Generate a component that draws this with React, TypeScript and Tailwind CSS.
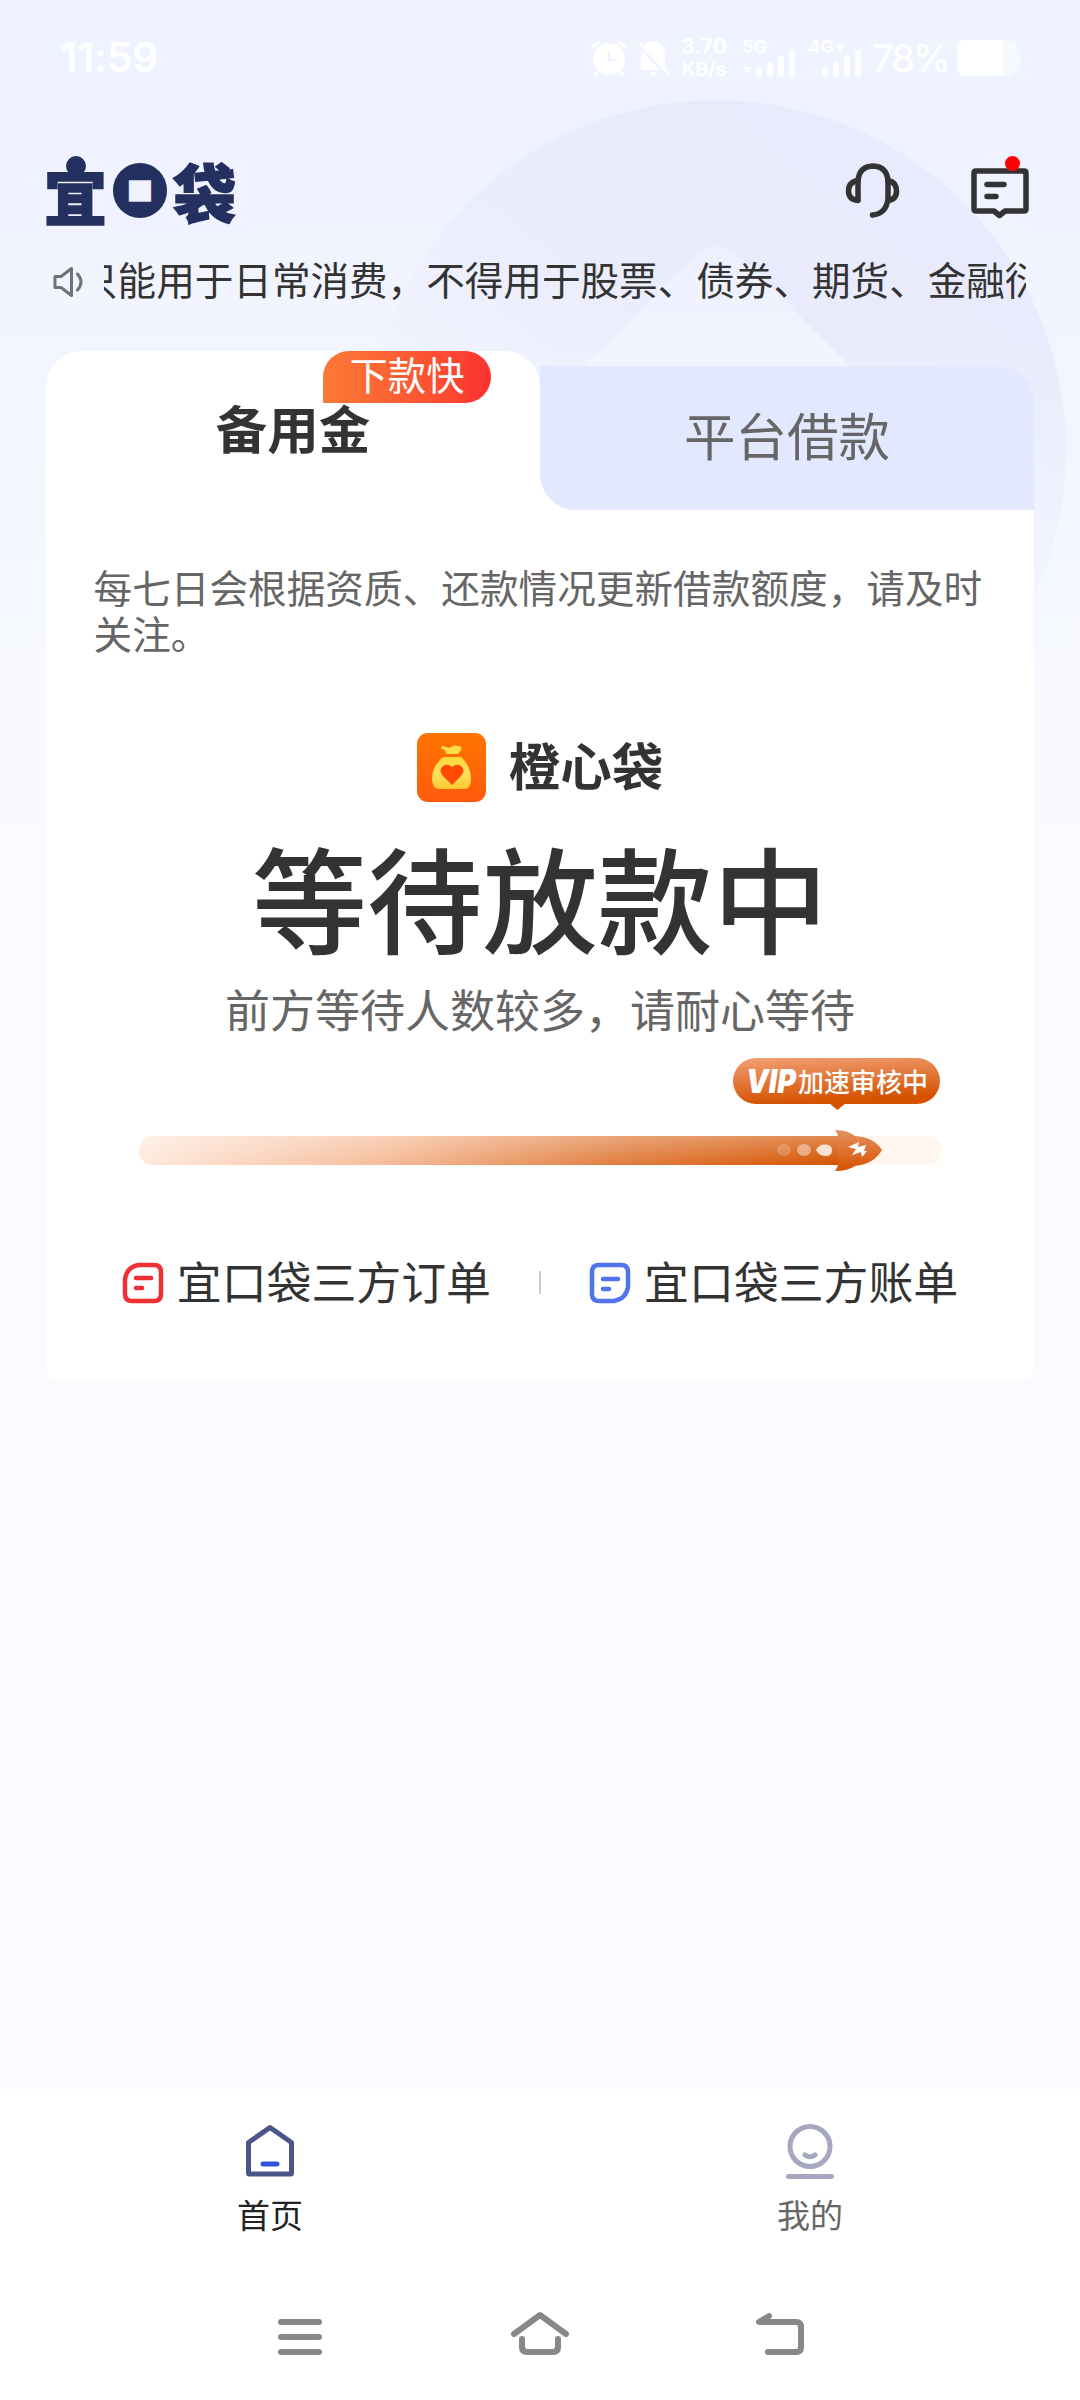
import React from 'react';

interface MenuLink {
  id: string;
  label: string;
  icon: React.ReactNode;
}

const OrderIcon: React.FC = () => (
  <svg width="42" height="42" viewBox="0 0 42 42" fill="none" stroke="#ee2f33" strokeWidth="4.500" strokeLinecap="round">
    <path d="M16 3H32Q39 3 39 10V32Q39 39 32 39H10Q3 39 3 32V17Q5 5 16 3Z" />
    <path d="M14 16H29M14 26H20" />
  </svg>
);

const BillIcon: React.FC = () => (
  <svg width="42" height="42" viewBox="0 0 42 42" fill="none" stroke="#4f74ee" strokeWidth="4.500" strokeLinecap="round">
    <path d="M10 3H32Q39 3 39 10V25Q37 37 25 39H10Q3 39 3 32V10Q3 3 10 3Z" />
    <path d="M14 17H29M14 27H20" />
  </svg>
);

const links: MenuLink[] = [
  { id: 'order', label: '宜口袋三方订单', icon: <OrderIcon /> },
  { id: 'bill', label: '宜口袋三方账单', icon: <BillIcon /> },
];

const Backdrop: React.FC = () => (
  <svg className="absolute left-0 top-0" width="1080" height="900" viewBox="0 0 1080 900">
    <defs>
      <linearGradient id="disc" gradientUnits="userSpaceOnUse" x1="880" y1="130" x2="480" y2="640">
        <stop offset="0" stopColor="#e8eafd" />
        <stop offset="0.45" stopColor="#ebedfd" />
        <stop offset="0.8" stopColor="#f2f4fe" />
      </linearGradient>
      <linearGradient id="discFade" x1="0" y1="0" x2="0" y2="1">
        <stop offset="0.35" stopColor="#fff" />
        <stop offset="0.85" stopColor="#000" />
      </linearGradient>
      <mask id="discMask">
        <rect x="366" y="100" width="700" height="700" fill="url(#discFade)" />
      </mask>
      <linearGradient id="peak" x1="0" y1="0" x2="0" y2="1">
        <stop offset="0" stopColor="#eef0fe" />
        <stop offset="1" stopColor="#f2f4ff" />
      </linearGradient>
    </defs>
    <circle cx="716" cy="450" r="350" fill="url(#disc)" mask="url(#discMask)" />
    <path d="M690 260Q717 232 744 260L860 376H574Z" fill="url(#peak)" />
  </svg>
);

const Signal: React.FC = () => (
  <svg width="40" height="27" viewBox="0 0 40 27" fill="#fff">
    <rect x="0" y="18" width="6" height="9" rx="3" />
    <rect x="11" y="12" width="6" height="15" rx="3" />
    <rect x="22" y="6" width="6" height="21" rx="3" />
    <rect x="33" y="0" width="6" height="27" rx="3" />
  </svg>
);

const StatusBar: React.FC = () => (
  <div className="flex h-[116px] items-center pl-[60px] pr-[60px] font-['Inter','Noto_Sans_CJK_SC',sans-serif] text-white">
    <span className="text-[41px] font-semibold tracking-[-0.300px]">11:59</span>
    <div className="ml-auto flex items-center">
      <svg width="36" height="38" viewBox="0 0 36 38">
        <circle cx="18" cy="20" r="16" fill="#fff" />
        <path d="M2 8L8 3M34 8L28 3M7 32L4 36M29 32L32 36" stroke="#fff" strokeWidth="3" strokeLinecap="round" />
        <path d="M18 12V21H25" stroke="#f0f2ff" strokeWidth="2.500" fill="none" />
      </svg>
      <svg className="ml-[10px]" width="32" height="38" viewBox="0 0 32 38">
        <path d="M4 28V16Q5 3 16 2Q27 3 28 16V28L31 31H1ZM12 33H20Q19 37 16 37Q13 37 12 33Z" fill="#fff" />
        <path d="M1 4L31 36" stroke="#eff2ff" strokeWidth="5" />
        <path d="M2 3L32 36" stroke="#fff" strokeWidth="2" />
      </svg>
      <div className="ml-[12px] flex w-[46px] flex-col items-center text-[21px] font-bold leading-[23px]">
        <span>3.70</span>
        <span className="text-[19px]">KB/s</span>
      </div>
      <div className="relative ml-[29px] flex h-[38px] items-end">
        <span className="absolute -left-[14px] -top-[1px] text-[18px] font-bold leading-[18px]">5G</span>
        <svg className="absolute -left-[13px] bottom-1" width="9" height="6" viewBox="0 0 9 6" fill="#fff">
          <path d="M0 0H9L4.500 6Z" />
        </svg>
        <Signal />
      </div>
      <div className="relative ml-[26px] flex h-[38px] items-end">
        <span className="absolute -left-[14px] -top-[1px] text-[18px] font-bold leading-[18px]">4G+</span>
        <Signal />
      </div>
      <span className="ml-[10px] w-[75px] text-[38px] font-medium tracking-[-2px]">78%</span>
      <div className="ml-[10px] flex h-[36px] w-[63px]">
        <div className="w-[46px] rounded-l-[8px] bg-white" />
        <div className="w-[14px] rounded-r-[8px] bg-white/50" />
        <div className="my-[10px] w-[3px] rounded-r-full bg-white/50" />
      </div>
    </div>
  </div>
);

const Header: React.FC = () => (
  <header className="flex h-[128px] items-start justify-between pl-[46px] pr-[50px] pt-[40px]">
    <h1 className="relative flex h-[70px] w-[190px] text-[63px] font-black leading-[62px] text-[#24305f]">
      <span className="-ml-[2px] mt-[6px] w-[63px] [-webkit-text-stroke:1.500px_#24305f]">宜</span>
      <span className="ml-[6px] mt-[7px] flex h-[55px] w-[55px] items-center justify-center rounded-full bg-[#24305f]">
        <span className="flex h-[28px] w-[28px] items-center justify-center rounded-[2px] bg-[#f0f3ff]">
          <span className="-mt-[3px] text-[42px] font-bold leading-[42px]">口</span>
        </span>
      </span>
      <span className="ml-[6px] mt-[3px] w-[63px] [-webkit-text-stroke:1.500px_#24305f]">袋</span>
      <span className="absolute left-[20px] top-0 h-[20px] w-[20px] rounded-full bg-[#24305f]" />
    </h1>
    <div className="flex items-start gap-[71px]">
      <svg className="mt-[7px]" width="55" height="56" viewBox="0 0 55 56" fill="none" stroke="#333" strokeWidth="5.500" strokeLinecap="round" strokeLinejoin="round">
        <path d="M13 37V18Q14 3.500 28 3Q42 3.500 43 18V36Q41 51 27.500 52" />
        <path d="M13 17.500Q3.500 19 3.500 28Q3.500 36.500 13 37.500M43 17.500Q51.500 19 51.500 28Q51.500 36.500 43 37.500" />
      </svg>
      <div className="relative">
        <svg className="mt-[10px]" width="59" height="54" viewBox="0 0 59 54" fill="none" stroke="#333" strokeWidth="5.500" strokeLinecap="round" strokeLinejoin="round">
          <path d="M5 5H53Q55 5 55 7V43Q55 45 53 45H34L28.500 49.500L23 45H5Q3 45 3 43V7Q3 5 5 5Z" />
          <path d="M16 18.500H33M16 30.500H25" />
        </svg>
        <span className="absolute left-[34px] top-0 h-[15px] w-[15px] rounded-full bg-[#ff0000]" />
      </div>
    </div>
  </header>
);

const Notice: React.FC = () => (
  <div className="flex h-[76px] items-center pl-[52px] pr-[54px]">
    <svg width="32" height="32" viewBox="0 0 32 32" fill="none" stroke="#6f7078" strokeWidth="3" strokeLinejoin="round" strokeLinecap="round">
      <path d="M3 10.500H9L19.500 2.500V29.500L9 21.500H3Z" />
      <path d="M25.500 8Q32.500 16 25.500 24" />
    </svg>
    <div className="ml-[20px] flex-1 overflow-hidden">
      <p className="-ml-[25px] -mt-[8px] whitespace-nowrap text-[38.600px] leading-[56px] text-[#333]">
        只能用于日常消费，不得用于股票、债券、期货、金融衍
      </p>
    </div>
  </div>
);

const Tabs: React.FC = () => (
  <div className="flex h-[159px] items-end">
    <div className="relative h-[159px] w-1/2 rounded-t-[36px] bg-white pt-[51px] text-center">
      <span className="text-[51.500px] font-bold leading-[50px] text-[#333]">备用金</span>
      <span className="absolute left-[277px] top-0 h-[52px] w-[168px] rounded-[26px] rounded-bl-none bg-linear-to-r from-[#fb7a35] to-[#fb3030] text-center text-[38.300px] leading-[46px] text-white">
        下款快
      </span>
    </div>
    <div className="h-[144px] w-1/2 bg-[linear-gradient(180deg,transparent_50%,#fff_50%)]">
      <div className="flex h-full items-center justify-center rounded-bl-[36px] rounded-tr-[36px] bg-[#e2e8fe] pb-[8px] text-[51.500px] text-[#666]">
        平台借款
      </div>
    </div>
  </div>
);

const MoneyBag: React.FC = () => (
  <svg width="69" height="69" viewBox="0 0 69 69">
    <defs>
      <linearGradient id="tile" x1="0" y1="0" x2="0" y2="1">
        <stop offset="0" stopColor="#ff7400" />
        <stop offset="1" stopColor="#ff5a0c" />
      </linearGradient>
      <linearGradient id="bag" x1="0" y1="0" x2="0" y2="1">
        <stop offset="0" stopColor="#ffd93a" />
        <stop offset="0.5" stopColor="#ffe05a" />
        <stop offset="1" stopColor="#ffc92e" />
      </linearGradient>
    </defs>
    <rect width="69" height="69" rx="11" fill="url(#tile)" />
    <path d="M24 14Q26 12 29 14Q33 16 36 13Q39 12 41 13Q46 13 44 17L41 21H29L28 17Q24 16 24 14Z" fill="#ffdd45" />
    <path d="M26 24H44Q54 33 54 46Q54 56 47 56H23Q15 56 15 46Q15 33 26 24Z" fill="url(#bag)" />
    <path d="M35 52L26 43Q21 37 26 33Q31 30 35 34Q39 30 44 33Q49 37 44 43Z" fill="#ff4a06" />
  </svg>
);

const ReviewProgress: React.FC = () => (
  <svg className="mt-[20px]" width="804" height="118" viewBox="138 1056 804 118">
    <defs>
      <linearGradient id="pill" x1="0" y1="0" x2="0.25" y2="1">
        <stop offset="0" stopColor="#f2a077" />
        <stop offset="1" stopColor="#d45200" />
      </linearGradient>
      <linearGradient id="bar" x1="0" y1="0" x2="1" y2="0.012">
        <stop offset="0" stopColor="#ffeade" />
        <stop offset="0.35" stopColor="#f6bd9b" />
        <stop offset="0.7" stopColor="#e07c3c" />
        <stop offset="1" stopColor="#d55300" />
      </linearGradient>
      <linearGradient id="sheen" x1="0" y1="0" x2="0" y2="1">
        <stop offset="0" stopColor="#fff" stopOpacity="0.3" />
        <stop offset="1" stopColor="#fff" stopOpacity="0" />
      </linearGradient>
      <linearGradient id="rocket" x1="0" y1="0" x2="0" y2="1">
        <stop offset="0" stopColor="#e69061" />
        <stop offset="1" stopColor="#d65300" />
      </linearGradient>
    </defs>
    <rect x="733" y="1058" width="207" height="46" rx="23" fill="url(#pill)" />
    <path d="M829 1103H846L837.500 1110Z" fill="#d45200" />
    <text x="746" y="1093" fontFamily="Inter, sans-serif" fontSize="33" fontWeight="900" fontStyle="italic" textLength="50" lengthAdjust="spacingAndGlyphs" fill="#fff">VIP</text>
    <text x="798" y="1092" fontSize="26" fontWeight="500" fill="#fff">加速审核中</text>
    <rect x="139" y="1136" width="803" height="29" rx="14.500" fill="#fff6ef" />
    <path d="M153 1136H845V1165H153A14.500 14.500 0 0 1 153 1136Z" fill="url(#bar)" />
    <path d="M153 1136H845V1165H153A14.500 14.500 0 0 1 153 1136Z" fill="url(#sheen)" />
    <ellipse cx="784" cy="1150" rx="7" ry="6" fill="#fff" opacity="0.2" />
    <ellipse cx="804" cy="1150" rx="7" ry="6" fill="#fff" opacity="0.42" />
    <path d="M816 1150Q819 1144 826 1144.500Q832 1145 832 1150Q832 1156 826 1156Q819 1156 816 1150Z" fill="#fff" opacity="0.8" />
    <path d="M835 1130Q848 1130 855 1136Q874 1137 882 1150Q874 1164 855 1166Q848 1171 835 1171Q838 1167 838 1164V1137Q838 1134 835 1130Z" fill="url(#rocket)" />
    <path d="M848 1147L859 1142L858 1147L866 1145L864 1151H867L862 1157L861 1152L852 1155L856 1149Z" fill="#fff" />
  </svg>
);

const LoanCard: React.FC = () => (
  <section className="flex h-[870px] flex-col items-center rounded-b-[12px] bg-white pt-[54px]">
    <p className="w-[893px] text-[38.650px] leading-[45.600px] text-[#666]">
      每七日会根据资质、还款情况更新借款额度，请及时关注。
    </p>
    <div className="mt-[78px] flex h-[69px] items-center gap-[23px]">
      <MoneyBag />
      <span className="-mt-[7px] text-[51.500px] font-bold leading-[60px] text-[#333]">橙心袋</span>
    </div>
    <h2 className="mt-[31px] text-[115.200px] font-medium leading-[124px] text-[#333]">等待放款中</h2>
    <p className="mt-[25px] text-[45px] leading-[54px] text-[#666]">前方等待人数较多，请耐心等待</p>
    <ReviewProgress />
    <div className="mt-[80px] flex w-full items-center justify-center">
      {links.map((link, index) => (
        <React.Fragment key={link.id}>
          {index > 0 && <span className="mx-[48px] h-[23px] w-[2px] bg-[#ccc]" />}
          <a className="flex items-center gap-[13px] text-[44.900px] leading-[60px] text-[#333]">
            {link.icon}
            <span className="-mt-[3px]">{link.label}</span>
          </a>
        </React.Fragment>
      ))}
    </div>
  </section>
);

const TabBar: React.FC = () => (
  <nav className="flex h-[184px] bg-white text-[33px] leading-[40px]">
    <div className="flex w-1/2 flex-col items-center pt-[34px] text-[#222]">
      <svg width="56" height="58" viewBox="0 0 56 58" fill="none" strokeWidth="5" strokeLinejoin="round" strokeLinecap="round">
        <path d="M28 4.500L49.500 19.500V50Q49.500 51 48.500 51H7.500Q6.500 51 6.500 50V19.500Z" stroke="#4a5688" />
        <path d="M21 41H35" stroke="#3355dd" />
      </svg>
      <span className="mt-[13px]">首页</span>
    </div>
    <div className="flex w-1/2 flex-col items-center pt-[34px] text-[#666]">
      <svg width="56" height="58" viewBox="0 0 56 58" fill="none" stroke="#a5a8be" strokeWidth="5" strokeLinecap="round">
        <circle cx="28" cy="23.500" r="20" />
        <path d="M23 32Q28 35.500 33 32M6.500 53.500H49.500" />
      </svg>
      <span className="mt-[13px]">我的</span>
    </div>
  </nav>
);

const SystemNav: React.FC = () => (
  <div className="flex h-[127px] justify-center gap-[180px] bg-white pt-[34px]">
    <svg width="60" height="56" viewBox="0 0 60 56" stroke="#888" strokeWidth="6" strokeLinecap="round">
      <path d="M11 15H49M11 30H49M11 45H49" />
    </svg>
    <svg width="60" height="56" viewBox="0 0 60 56" fill="none" stroke="#888" strokeWidth="6" strokeLinecap="round" strokeLinejoin="round">
      <path d="M4 27L30 8L56 27M12 32V40Q12 45 17 45H43Q48 45 48 40V32" />
    </svg>
    <svg width="60" height="56" viewBox="0 0 60 56" fill="none" stroke="#888" strokeWidth="6" strokeLinecap="round" strokeLinejoin="round">
      <path d="M19 9L9 15H46Q51 15 51 20V40Q51 45 46 45H18" />
    </svg>
  </div>
);

const App: React.FC = () => {
  return (
    <div className="relative flex h-[2400px] w-[1080px] flex-col overflow-hidden bg-[linear-gradient(180deg,#eff2ff_0px,#f0f3ff_200px,#f5f7ff_500px,#fafbff_920px)] font-['Noto_Sans_CJK_SC',sans-serif]">
      <Backdrop />
      <div className="relative flex flex-1 flex-col">
        <StatusBar />
        <Header />
        <Notice />
        <main className="mt-[31px] px-[46px]">
          <Tabs />
          <LoanCard />
        </main>
        <div className="mt-auto">
          <TabBar />
          <SystemNav />
        </div>
      </div>
    </div>
  );
};

export default App;
